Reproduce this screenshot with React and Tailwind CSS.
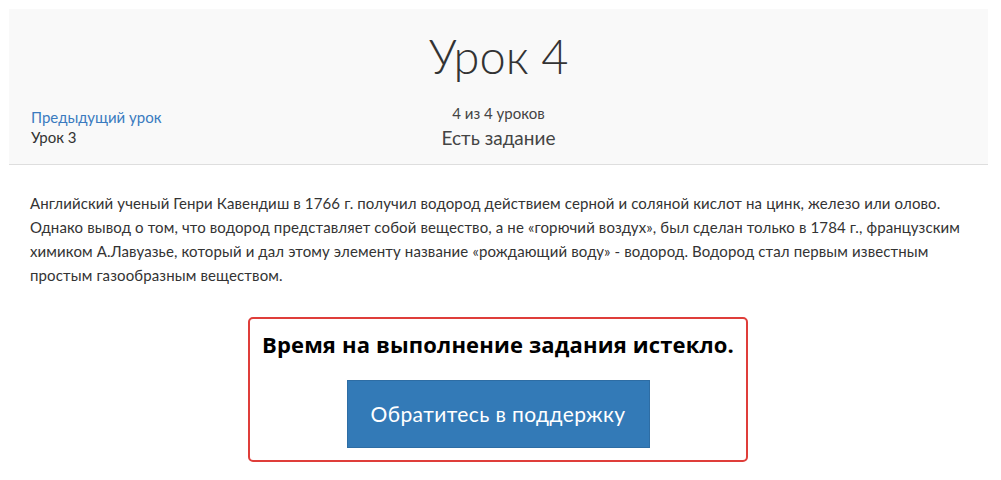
export default function App() {
  const font = { fontFamily: "Lato, 'Noto Sans', sans-serif" };
  return (
    <div className="w-[1001px] h-[480px] bg-white text-[#333]" style={font}>
      <div className="pt-[9px] px-[9px] pr-[13px]">
        <div className="bg-[#f9f9f9] border-b border-[#dedede] h-[156px] pt-[19px] px-[22px]">
          <h1 className="text-center text-[47px] leading-[56px] font-light text-[#333]">Урок 4</h1>
          <div className="grid grid-cols-3 mt-[19px]">
            <div className="pt-[4px]">
              <div className="text-[15px] leading-[20px] text-[#3a7bbf]">Предыдущий урок</div>
              <div className="text-[15px] leading-[20px] text-[#333]">Урок 3</div>
            </div>
            <div className="text-center">
              <div className="text-[15px] leading-[20px] text-[#444]">4 из 4 уроков</div>
              <div className="text-[19px] leading-[28px] text-[#444] mt-[1px]">Есть задание</div>
            </div>
            <div></div>
          </div>
        </div>
      </div>
      <p className="px-[30px] pt-[26px] text-[15px] leading-[24px] tracking-[0.13px] text-[#333]">
        Английский ученый Генри Кавендиш в 1766 г. получил водород действием серной и соляной кислот на цинк, железо или олово. Однако вывод о том, что водород представляет собой вещество, а не «горючий воздух», был сделан только в 1784 г., французским химиком А.Лавуазье, который и дал этому элементу название «рождающий воду» - водород. Водород стал первым известным простым газообразным веществом.
      </p>
      <div className="flex justify-center mt-[30px] pr-[5px]">
        <div className="w-[500px] h-[145px] border-2 border-[#df3e3a] rounded-[5px] flex flex-col items-center pt-[10px]">
          <div className="text-[22px] leading-[30px] font-bold text-black tracking-[0.15px]" style={{ fontFamily: "'Open Sans', sans-serif" }}>Время на выполнение задания истекло.</div>
          <button className="mt-[21px] w-[303px] h-[68px] bg-[#337ab7] border border-[#2e6da4] text-white text-[21px] tracking-[0.4px]">Обратитесь в поддержку</button>
        </div>
      </div>
    </div>
  );
}
